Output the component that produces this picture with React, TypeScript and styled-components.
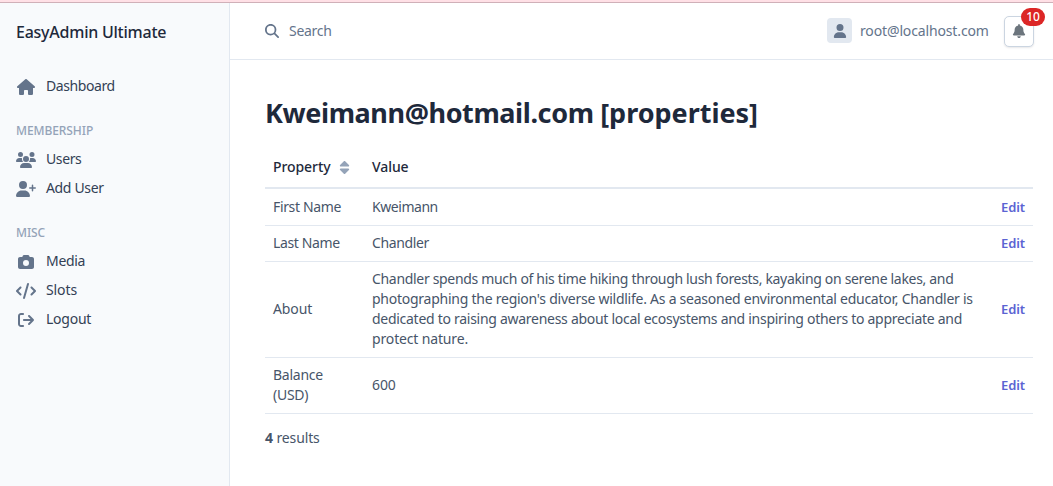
import React from 'react';
import styled, { createGlobalStyle } from 'styled-components';
import {
  FaHouse, FaUsers, FaUserPlus, FaCamera, FaCode,
  FaMagnifyingGlass, FaUser, FaBell, FaSort,
} from 'react-icons/fa6';

const GlobalStyle = createGlobalStyle`
  * { box-sizing: border-box; }
  body {
    margin: 0;
    background: #fff;
    color: #475569;
    font: 14px/20px "Noto Sans", "Open Sans", sans-serif;
    letter-spacing: -0.3px;
    overflow: hidden;
  }
`;

const Page = styled.div`
  display: flex;
  flex-direction: column;
  height: 486px;
`;
const TopStrip = styled.div`
  height: 3px;
  flex: none;
  background: #ffe0e6;
  border-bottom: 1px solid #d0b0b8;
`;
const Shell = styled.div`
  display: flex;
  flex: 1;
  min-height: 0;
`;
const Sidebar = styled.aside`
  width: 230px;
  flex: none;
  padding: 17px 16px 0;
  background: #f8fafc;
  border-right: 1px solid #e2e8f0;
`;
const Brand = styled.div`
  margin-bottom: 31px;
  color: #1e293b;
  font-size: 16px;
  font-weight: 500;
  line-height: 24px;
  letter-spacing: -0.24px;
  white-space: nowrap;
`;
const MenuItem = styled.a<{ $tracking?: number }>`
  display: flex;
  align-items: center;
  height: 29px;
  color: #334155;
  padding-bottom: 7px;
  letter-spacing: ${(p) => p.$tracking ?? -0.25}px;
`;
const MenuIcon = styled.span`
  display: flex;
  justify-content: center;
  width: 20px;
  margin: 2px 10px 0 0;
  color: #64748b;
  svg {
    flex: none;
    width: 20px;
    height: 16px;
  }
`;
const MenuHeading = styled.div`
  margin: 18px 0 8px;
  color: #94a3b8;
  font-size: 12px;
  font-weight: 500;
  line-height: 18px;
  letter-spacing: -0.08px;
  text-transform: uppercase;
`;
const Main = styled.div`
  flex: 1;
  display: flex;
  flex-direction: column;
`;
const Header = styled.header`
  display: flex;
  align-items: center;
  height: 57px;
  padding: 0 19px 0 35px;
  border-bottom: 1px solid #e2e8f0;
  color: #64748b;
`;
const Search = styled.div`
  display: flex;
  align-items: center;
  gap: 10px;
  flex: 1;
`;
const Avatar = styled.span`
  display: flex;
  align-items: center;
  justify-content: center;
  width: 25px;
  height: 25px;
  margin: 0 8px 1px 0;
  border-radius: 4px;
  background: #e2e8f0;
`;
const UserName = styled.span`
  width: 129px;
  margin-right: 15px;
  letter-spacing: -0.14px;
  white-space: nowrap;
`;
const BellButton = styled.button`
  position: relative;
  display: flex;
  align-items: center;
  justify-content: center;
  width: 30px;
  height: 31px;
  padding: 0 0 1px;
  border: 1px solid #cbd5e1;
  border-radius: 5px;
  background: #fff;
  color: #6c757d;
  box-shadow: 0 1px 2px rgba(15, 23, 42, 0.1);
`;
const Badge = styled.span`
  position: absolute;
  top: -9px;
  right: -12px;
  width: 24px;
  height: 18px;
  border-radius: 9px;
  background: #dc2626;
  color: #fff;
  font: 500 12px/18px "Noto Sans", sans-serif;
  letter-spacing: 0;
  text-align: center;
`;
const Content = styled.main`
  padding: 35px 20px 0 35px;
`;
const Title = styled.h1`
  margin: 0 0 19px;
  color: #1e293b;
  font-size: 27px;
  font-weight: 700;
  line-height: 35px;
  letter-spacing: -0.4px;
  white-space: nowrap;
`;
const TitleSuffix = styled.span`
  letter-spacing: -0.02px;
`;
const Table = styled.table`
  width: 100%;
  table-layout: fixed;
  border-collapse: separate;
  border-spacing: 0;
`;
const HeadCell = styled.th<{ $width?: number }>`
  width: ${(p) => (p.$width ? `${p.$width}px` : 'auto')};
  height: 40px;
  padding: 0 8px 2px;
  border-bottom: 2px solid #e2e8f0;
  color: #1e293b;
  font-weight: 500;
  letter-spacing: -0.08px;
  text-align: left;
`;
const SortLabel = styled.span`
  display: flex;
  align-items: center;
  gap: 6px;
  svg { color: #94a3b8; }
`;
const Cell = styled.td<{ $first?: boolean }>`
  padding: ${(p) => (p.$first ? '8px 8px' : '7px 8px 8px')};
  border-bottom: 1px solid #e2e8f0;
  vertical-align: middle;
`;
const Line = styled.span<{ $tracking?: number }>`
  display: block;
  white-space: nowrap;
  letter-spacing: ${(p) => p.$tracking ?? -0.3}px;
`;
const EditLink = styled.a`
  display: block;
  color: #5b63d3;
  font-size: 13px;
  font-weight: 600;
  letter-spacing: -0.1px;
  text-align: right;
`;
const Results = styled.div`
  margin-top: 14px;
  letter-spacing: -0.12px;
`;

const LogoutIcon = () => (
  <svg viewBox="0 0 512 512" fill="currentColor">
    <path d="M502.6 278.6c12.5-12.5 12.5-32.8 0-45.3l-128-128c-12.5-12.5-32.8-12.5-45.3 0s-12.5 32.8 0 45.3L402.7 224 192 224c-17.7 0-32 14.3-32 32s14.3 32 32 32l210.7 0-73.4 73.4c-12.5 12.5-12.5 32.8 0 45.3s32.8 12.5 45.3 0l128-128zM160 96c17.7 0 32-14.3 32-32s-14.3-32-32-32L96 32C43 32 0 75 0 128L0 384c0 53 43 96 96 96l64 0c17.7 0 32-14.3 32-32s-14.3-32-32-32l-64 0c-17.7 0-32-14.3-32-32l0-256c0-17.7 14.3-32 32-32l64 0z" />
  </svg>
);

const sections = [
  {
    heading: 'Membership',
    items: [
      { label: 'Users', icon: <FaUsers />, tracking: -0.4 },
      { label: 'Add User', icon: <FaUserPlus />, tracking: -0.35 },
    ],
  },
  {
    heading: 'Misc',
    items: [
      { label: 'Media', icon: <FaCamera />, tracking: -0.3 },
      { label: 'Slots', icon: <FaCode />, tracking: -0.1 },
      { label: 'Logout', icon: <LogoutIcon />, tracking: -0.25 },
    ],
  },
];

type TextLine = { text: string; tracking?: number };
const rows: { name: TextLine[]; value: TextLine[] }[] = [
  { name: [{ text: 'First Name', tracking: -0.35 }], value: [{ text: 'Kweimann', tracking: -0.45 }] },
  { name: [{ text: 'Last Name', tracking: -0.37 }], value: [{ text: 'Chandler', tracking: -0.38 }] },
  {
    name: [{ text: 'About', tracking: -0.1 }],
    value: [
      { text: 'Chandler spends much of his time hiking through lush forests, kayaking on serene lakes, and', tracking: -0.32 },
      { text: "photographing the region's diverse wildlife. As a seasoned environmental educator, Chandler is", tracking: -0.25 },
      { text: 'dedicated to raising awareness about local ecosystems and inspiring others to appreciate and', tracking: -0.28 },
      { text: 'protect nature.', tracking: -0.15 },
    ],
  },
  {
    name: [{ text: 'Balance', tracking: -0.25 }, { text: '(USD)', tracking: -0.25 }],
    value: [{ text: '600', tracking: -0.1 }],
  },
];

const Lines = ({ lines }: { lines: TextLine[] }) => (
  <>
    {lines.map((l) => <Line key={l.text} $tracking={l.tracking}>{l.text}</Line>)}
  </>
);

export default function App() {
  return (
    <Page>
      <GlobalStyle />
      <TopStrip />
      <Shell>
        <Sidebar>
          <Brand>EasyAdmin Ultimate</Brand>
          <MenuItem $tracking={-0.42}><MenuIcon><FaHouse /></MenuIcon>Dashboard</MenuItem>
          {sections.map((s) => (
            <React.Fragment key={s.heading}>
              <MenuHeading>{s.heading}</MenuHeading>
              {s.items.map((i) => (
                <MenuItem key={i.label} $tracking={i.tracking}><MenuIcon>{i.icon}</MenuIcon>{i.label}</MenuItem>
              ))}
            </React.Fragment>
          ))}
        </Sidebar>
        <Main>
          <Header>
            <Search><FaMagnifyingGlass size={14} />Search</Search>
            <Avatar><FaUser size={14} /></Avatar>
            <UserName>root@localhost.com</UserName>
            <BellButton><FaBell size={14} /><Badge>10</Badge></BellButton>
          </Header>
          <Content>
            <Title>Kweimann@hotmail.com <TitleSuffix>[properties]</TitleSuffix></Title>
            <Table>
              <thead>
                <tr>
                  <HeadCell $width={99}><SortLabel>Property<FaSort size={15} /></SortLabel></HeadCell>
                  <HeadCell>Value</HeadCell>
                  <HeadCell $width={48} />
                </tr>
              </thead>
              <tbody>
                {rows.map((r, n) => (
                  <tr key={r.name[0].text}>
                    <Cell $first={n === 0}><Lines lines={r.name} /></Cell>
                    <Cell $first={n === 0}><Lines lines={r.value} /></Cell>
                    <Cell $first={n === 0}><EditLink>Edit</EditLink></Cell>
                  </tr>
                ))}
              </tbody>
            </Table>
            <Results><b>4</b> results</Results>
          </Content>
        </Main>
      </Shell>
    </Page>
  );
}
